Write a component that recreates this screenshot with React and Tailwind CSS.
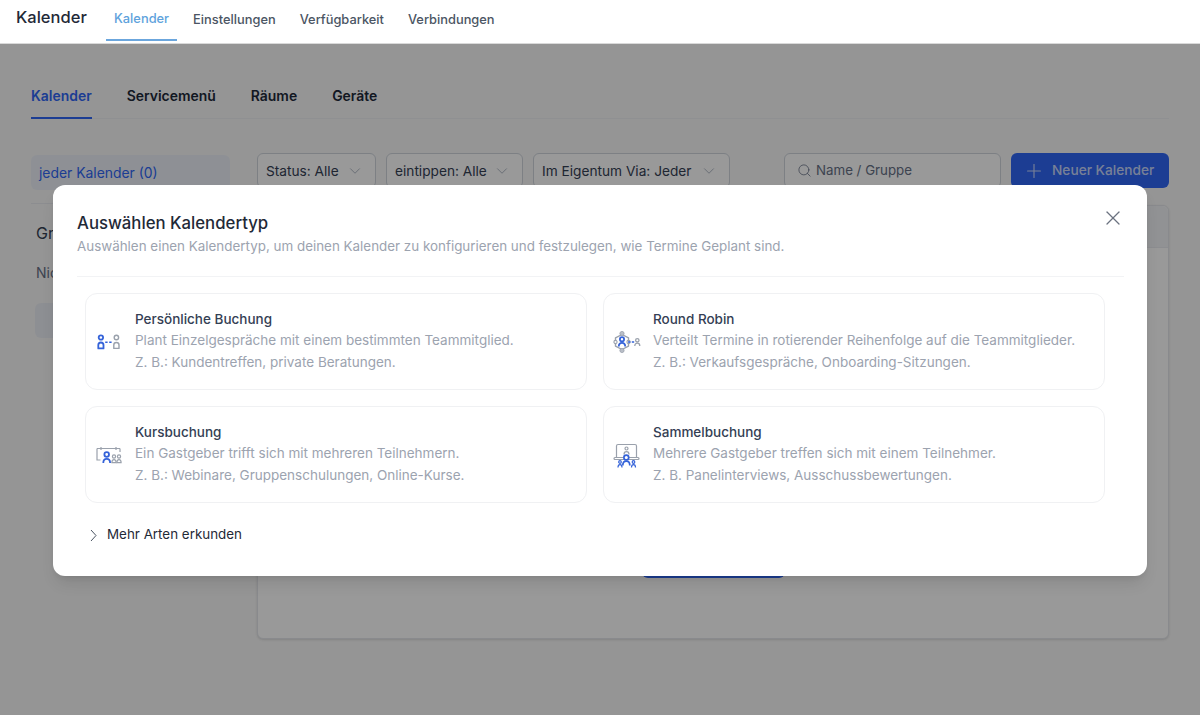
import React from 'react';
import { ChevronDown, Search, Plus, X } from 'lucide-react';

const BLUE = '#3563d9';
const GRAY = '#9aa1ac';

const PersonIcon = () => (
  <svg width="24" height="24" viewBox="0 0 24 24" fill="none" strokeWidth="1.4" className="shrink-0">
    <circle cx="3.900" cy="7.500" r="2.200" stroke={BLUE} strokeWidth="1.800" />
    <path d="M1.300 18.400v-3.300c0-1.600 1-2.600 2.600-2.600s2.600 1 2.600 2.600v3.300z" stroke={BLUE} strokeWidth="1.800" strokeLinejoin="round" />
    <path d="M8.200 12.300h6.600" stroke={BLUE} strokeWidth="1.400" strokeDasharray="2.400 1.600" />
    <circle cx="19.400" cy="7.500" r="2.200" stroke={GRAY} />
    <path d="M16.800 18.400v-3.300c0-1.600 1-2.600 2.600-2.600s2.600 1 2.600 2.600v3.300z" stroke={GRAY} strokeLinejoin="round" />
  </svg>
);

const RoundRobinIcon = () => (
  <svg width="28" height="28" viewBox="0 0 28 28" fill="none" className="shrink-0">
    <path d="M9 6.500l6.500 3.300v8.400L9 21.500l-6.500-3.300V9.800z" stroke={GRAY} strokeWidth="1.400" strokeLinejoin="round" />
    <circle cx="9" cy="5.500" r="2.100" fill="#b9bec7" stroke={GRAY} strokeWidth="0.800" />
    <circle cx="9" cy="22.500" r="2.100" fill="#b9bec7" stroke={GRAY} strokeWidth="0.800" />
    <circle cx="2.500" cy="14" r="1.600" fill="#fff" stroke={GRAY} strokeWidth="1.100" />
    <circle cx="15.500" cy="14" r="1.600" fill="#fff" stroke={GRAY} strokeWidth="1.100" />
    <circle cx="9" cy="11.300" r="2.100" fill="#fff" stroke={BLUE} strokeWidth="1.800" />
    <path d="M5.800 18.500c0-2.400 1.300-3.600 3.200-3.600s3.200 1.200 3.200 3.600" stroke={BLUE} strokeWidth="1.800" />
    <path d="M15 14h6.500" stroke={BLUE} strokeWidth="1.400" strokeDasharray="2.400 1.400" />
    <circle cx="24.300" cy="12.300" r="1.700" stroke={GRAY} strokeWidth="1.300" />
    <path d="M21.800 18c0-2 1-2.800 2.500-2.800s2.500.8 2.500 2.800" stroke={GRAY} strokeWidth="1.300" />
  </svg>
);

const KursIcon = () => (
  <svg width="28" height="24" viewBox="0 0 28 24" fill="none" className="shrink-0">
    <path d="M2 5.500h23M6 4v3M21 4v3" stroke={GRAY} strokeWidth="1.200" />
    <path d="M2 5.500v11.500h3.500M25 5.500v3.500" stroke={GRAY} strokeWidth="1.200" />
    <circle cx="11.700" cy="11.500" r="2.300" stroke={BLUE} strokeWidth="1.800" />
    <path d="M8.300 20c0-2.800 1.300-4.100 3.400-4.100s3.400 1.300 3.400 4.100" stroke={BLUE} strokeWidth="1.800" />
    <circle cx="19" cy="13.500" r="1.600" stroke={GRAY} strokeWidth="1.200" />
    <path d="M16.900 19.600c0-2 .8-2.900 2.100-2.900s2.100.9 2.100 2.900z" stroke={GRAY} strokeWidth="1.200" />
    <circle cx="24" cy="13.500" r="1.600" stroke={GRAY} strokeWidth="1.200" />
    <path d="M21.900 19.600c0-2 .8-2.900 2.100-2.900s2.100.9 2.100 2.900z" stroke={GRAY} strokeWidth="1.200" />
  </svg>
);

const SammelIcon = () => (
  <svg width="28" height="26" viewBox="0 0 28 26" fill="none" className="shrink-0">
    <path d="M3.500 15.500V4a1.500 1.500 0 0 1 1.500-1.500h17a1.500 1.500 0 0 1 1.500 1.500v11.500" stroke={GRAY} strokeWidth="1.200" />
    <rect x="1" y="15.500" width="25" height="2" rx="1" stroke={GRAY} strokeWidth="1.200" />
    <circle cx="13.500" cy="6.500" r="1.500" stroke={GRAY} strokeWidth="1.200" />
    <path d="M11 12.500c0-1.800 1-2.800 2.500-2.800s2.500 1 2.500 2.800" stroke={GRAY} strokeWidth="1.200" />
    <circle cx="13.300" cy="15.500" r="2.400" fill="#fff" stroke={BLUE} strokeWidth="1.700" />
    <path d="M9.800 23.500c0-2.600 1.500-4.300 3.500-4.300s3.500 1.700 3.500 4.300" stroke={BLUE} strokeWidth="1.700" />
    <circle cx="7" cy="20" r="1.300" stroke={BLUE} strokeWidth="1.200" />
    <path d="M5 25.500c0-1.800.8-2.800 2-2.800s2 1 2 2.800" stroke={BLUE} strokeWidth="1.200" />
    <circle cx="20.500" cy="20" r="1.300" stroke={BLUE} strokeWidth="1.200" />
    <path d="M18.500 25.500c0-1.800.8-2.800 2-2.800s2 1 2 2.800" stroke={BLUE} strokeWidth="1.200" />
  </svg>
);

const types = [
  { title: 'Persönliche Buchung', desc: 'Plant Einzelgespräche mit einem bestimmten Teammitglied.', hint: 'Z. B.: Kundentreffen, private Beratungen.', icon: <PersonIcon /> },
  { title: 'Round Robin', desc: 'Verteilt Termine in rotierender Reihenfolge auf die Teammitglieder.', hint: 'Z. B.: Verkaufsgespräche, Onboarding-Sitzungen.', icon: <RoundRobinIcon /> },
  { title: 'Kursbuchung', desc: 'Ein Gastgeber trifft sich mit mehreren Teilnehmern.', hint: 'Z. B.: Webinare, Gruppenschulungen, Online-Kurse.', icon: <KursIcon /> },
  { title: 'Sammelbuchung', desc: 'Mehrere Gastgeber treffen sich mit einem Teilnehmer.', hint: 'Z. B. Panelinterviews, Ausschussbewertungen.', icon: <SammelIcon /> },
];

const FilterSelect = ({ label, width }) => (
  <div className={`h-[35px] ${width} flex items-center justify-between pl-2 pr-[11px] border border-[#d0d5dd] rounded-md bg-white text-[13.7px] text-[#344054]`}>
    <span className="pt-px">{label}</span>
    <ChevronDown size={18} strokeWidth={1} className="text-[#98a2b3]" />
  </div>
);

const TypeCard = ({ type }) => (
  <div className="h-[97px] border border-[#f0f1f3] rounded-xl flex items-center pl-[11px] pr-3 bg-white">
    <div className="w-6 shrink-0 flex justify-center">{type.icon}</div>
    <div className="ml-[14px] text-[13.5px] leading-[22px] -mt-[2px]">
      <div className="font-medium text-[#344054] leading-[20px]">{type.title}</div>
      <div className="text-[#9ca3af]">{type.desc}</div>
      <div className="text-[#9ca3af]">{type.hint}</div>
    </div>
  </div>
);

export default function App() {
  return (
    <div className="h-[715px] w-[1200px] overflow-hidden flex flex-col bg-[#f9f9f9] font-['Inter',sans-serif]">
      <header className="h-[44px] shrink-0 bg-white flex items-start pl-4 border-b border-[#d9d9d9]">
        <h1 className="text-[16.5px] leading-[35px] font-medium text-[#1f2937] w-[90px]">Kalender</h1>
        <nav className="flex gap-2 text-[12.85px] font-medium text-[#4b5563]">
          <a className="h-[41px] px-2 pt-[10px] leading-[18px] text-[#5ea2dc] border-b-2 border-[#6ba6dd]">Kalender</a>
          <a className="h-[41px] px-2 pt-[11px] leading-[18px]">Einstellungen</a>
          <a className="h-[41px] px-2 pt-[11px] leading-[18px]">Verfügbarkeit</a>
          <a className="h-[41px] px-2 pt-[11px] leading-[18px]">Verbindungen</a>
        </nav>
      </header>

      <main className="relative flex-1 px-[31px]">
        <div className="h-[75px] border-b border-[#eef0f3] flex gap-[35px] text-[13.95px] font-semibold text-[#1d2939]">
          <a className="h-[75px] pt-[42px] leading-[20px] text-[#2f66f6] border-b-2 border-[#2f66f6]">Kalender</a>
          <a className="pt-[42px] leading-[20px]">Servicemenü</a>
          <a className="pt-[42px] leading-[20px]">Räume</a>
          <a className="pt-[42px] leading-[20px]">Geräte</a>
        </div>

        <div className="flex gap-[27px] pt-[34px]">
          <aside className="w-[199px] shrink-0">
            <div className="h-[35px] mt-[2px] pt-px bg-[#edf1f8] rounded-md pl-2 flex items-center text-[13.9px] text-[#2f66f6]">jeder Kalender (0)</div>
            <div className="mt-[13px] border-t border-[#eaecf0] pt-[19px] pl-[5px] text-base leading-[20px] text-[#344054]">Gruppen</div>
            <div className="mt-[20px] pl-[5px] text-sm text-[#667085]">Nichts</div>
            <div className="mt-[20px] ml-1 h-[35px] bg-[#eceff5] rounded-md" />
          </aside>

          <section className="w-[912px]">
            <div className="flex items-center h-[35px]">
              <div className="flex gap-[10px]">
                <FilterSelect label="Status: Alle" width="w-[119px]" />
                <FilterSelect label="eintippen: Alle" width="w-[137px]" />
                <FilterSelect label="Im Eigentum Via: Jeder" width="w-[197px]" />
              </div>
              <div className="ml-[54px] h-[35px] w-[217px] flex items-center gap-1 pl-3 border border-[#d0d5dd] rounded-md bg-white text-[13.3px] text-[#667085]">
                <Search size={15} strokeWidth={1.25} />
                <span className="pt-px">Name / Gruppe</span>
              </div>
              <button className="ml-[10px] h-[35px] w-[158px] flex items-center gap-[7px] pl-3 rounded-md bg-[#2f66f6] text-[13.7px] font-medium text-[#c9d6fb]">
                <Plus size={22} strokeWidth={1.25} />
                Neuer Kalender
              </button>
            </div>
            <div className="mt-[17px] h-[434px] border border-[#e4e7ec] rounded-md bg-white shadow flex flex-col">
              <div className="h-[42px] bg-[#f2f4f7] border-b border-[#eaecf0] rounded-t-md" />
              <div className="flex-1 flex flex-col items-center justify-end pb-[60px]">
                <div className="w-[143px] h-[36px] rounded-md bg-[#2f66f6]" />
              </div>
            </div>
          </section>
        </div>

        <div className="absolute inset-0 bg-black/40" />

        <div className="absolute left-[53px] top-[141px] w-[1094px] h-[391px] bg-white rounded-xl pt-[27px] pl-6 shadow-lg">
          <button className="absolute right-[22px] top-[21px] text-[#6b7280]">
            <X size={24} strokeWidth={1.25} />
          </button>
          <h2 className="text-[16.75px] leading-[22px] font-medium text-[#1f2937]">Auswählen Kalendertyp</h2>
          <p className="mt-[2px] text-[13.4px] leading-[20px] text-[#9ca3af]">
            Auswählen einen Kalendertyp, um deinen Kalender zu konfigurieren und festzulegen, wie Termine Geplant sind.
          </p>
          <div className="mt-[20px] w-[1047px] border-t border-[#f2f3f5]" />
          <div className="mt-4 ml-2 w-[1020px] grid grid-cols-2 gap-x-4 gap-y-[16px]">
            {types.map((t) => (
              <TypeCard key={t.title} type={t} />
            ))}
          </div>
          <div className="mt-[21px] ml-[13px] flex items-center gap-[10px] text-[13.4px] leading-[20px] text-[#1f2937]">
            <svg width="7" height="13" viewBox="0 0 7 13" fill="none" className="mt-[3px]">
              <path d="M1 1l5 5.500-5 5.500" stroke="#4b5563" strokeWidth="1" />
            </svg>
            <span>Mehr Arten erkunden</span>
          </div>
        </div>
      </main>
    </div>
  );
}
